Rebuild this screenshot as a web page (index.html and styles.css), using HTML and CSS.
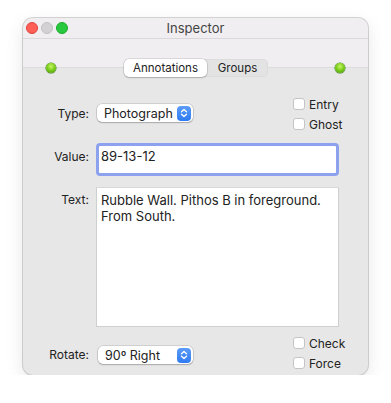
FILE: index.html
```html
<!DOCTYPE html>
<html lang="en">
<head>
    <meta charset="UTF-8">
    <title>Inspector</title>
    <link rel="stylesheet" href="styles.css">
</head>
<body>
    <div class="window">
        <div class="titlebar">
            <div class="lights">
                <span class="light red"></span>
                <span class="light off"></span>
                <span class="light green"></span>
            </div>
            <div class="title">Inspector</div>
        </div>

        <div class="toolbar"></div>

        <div class="tabrow">
            <span class="led"></span>
            <div class="tabs">
                <div class="segmented">
                    <span class="tab selected">Annotations</span>
                    <span class="tab">Groups</span>
                </div>
            </div>
            <span class="led"></span>
        </div>

        <div class="content">
            <div class="row row-type">
                <label class="label">Type:</label>
                <div class="control split">
                    <div class="popup">
                        <span>Photograph</span>
                        <span class="stepper">
                            <svg width="8" height="10" viewBox="0 0 8 10"><path d="M1.5 3.8 L4 1.5 L6.5 3.8 M1.5 6.2 L4 8.5 L6.5 6.2" fill="none" stroke="#fff" stroke-width="1.3" stroke-linecap="round" stroke-linejoin="round"/></svg>
                        </span>
                    </div>
                    <div class="checks">
                        <div class="check"><span class="box"></span>Entry</div>
                        <div class="check"><span class="box"></span>Ghost</div>
                    </div>
                </div>
            </div>

            <div class="row row-value">
                <label class="label">Value:</label>
                <div class="field focused">89-13-12</div>
            </div>

            <div class="row row-text">
                <label class="label">Text:</label>
                <div class="field area">Rubble Wall. Pithos B in foreground.<br>From South.</div>
            </div>

            <div class="row row-rotate">
                <label class="label">Rotate:</label>
                <div class="control split">
                    <div class="popup">
                        <span>90º Right</span>
                        <span class="stepper">
                            <svg width="8" height="10" viewBox="0 0 8 10"><path d="M1.5 3.8 L4 1.5 L6.5 3.8 M1.5 6.2 L4 8.5 L6.5 6.2" fill="none" stroke="#fff" stroke-width="1.3" stroke-linecap="round" stroke-linejoin="round"/></svg>
                        </span>
                    </div>
                    <div class="checks">
                        <div class="check"><span class="box"></span>Check</div>
                        <div class="check"><span class="box"></span>Force</div>
                    </div>
                </div>
            </div>
        </div>
    </div>
</body>
</html>
```

FILE: styles.css
```css
body {
    margin: 0;
    padding: 18px 0 0 23px;
    background: #ffffff;
    font-family: Inter, "Liberation Sans", sans-serif;
    color: #222;
}

.window {
    width: 345px;
    height: 357px;
    border-radius: 10px;
    overflow: hidden;
    background: #e7e7e7;
    box-shadow: 0 0 0 1px rgba(0,0,0,0.16), 0 6px 18px rgba(0,0,0,0.10);
    display: flex;
    flex-direction: column;
}

.titlebar {
    height: 20px;
    background: #f0eef0;
    border-bottom: 1px solid #dad8da;
    display: flex;
    align-items: center;
}

.lights {
    display: flex;
    gap: 3px;
    padding-left: 3px;
}

.light {
    width: 12px;
    height: 12px;
    border-radius: 50%;
    box-sizing: border-box;
}

.light.red { background: #fe5f57; border: 0.5px solid #e0443e; }
.light.off { background: #d3d1d3; border: 0.5px solid #c3c1c3; }
.light.green { background: #28c840; border: 0.5px solid #1aab29; }

.title {
    flex: 1;
    text-align: center;
    font-size: 13px;
    color: #454545;
    margin-right: 45px;
}

.toolbar {
    height: 20px;
    background: #f0eef0;
}

.tabrow {
    height: 18px;
    background: linear-gradient(to bottom, #f0eef0 0, #f0eef0 8px, #dcdcdc 8px, #dcdcdc 9px, #e7e7e7 9px);
    display: flex;
    align-items: center;
    padding: 0 23px;
}

.led {
    width: 10px;
    height: 10px;
    border-radius: 50%;
    background: radial-gradient(circle at 50% 35%, #c8f56a 0, #7ed01c 45%, #3f8f08 100%);
    box-shadow: 0 0 0 0.5px #3d7a0a;
}

.tabs {
    flex: 1;
    display: flex;
    justify-content: center;
}

.segmented {
    display: flex;
    background: #e3e3e3;
    border-radius: 5px;
    box-shadow: inset 0 0 0 0.5px rgba(0,0,0,0.06);
    margin-left: 1px;
}

.tab {
    font-size: 11.5px;
    height: 18px;
    line-height: 18px;
    text-align: center;
    color: #222;
}

.tab:last-child {
    width: 61px;
}

.tab.selected {
    width: 83px;
    background: #fff;
    border-radius: 5px;
    box-shadow: 0 0 0 0.5px rgba(0,0,0,0.18), 0 1px 1.5px rgba(0,0,0,0.18);
}

.content {
    flex: 1;
    padding: 17px 29px 0 0;
    display: flex;
    flex-direction: column;
}

.row {
    display: grid;
    grid-template-columns: 66px 1fr;
    column-gap: 7px;
}

.label {
    font-size: 12px;
    text-align: right;
    color: #222;
}

.split {
    display: flex;
    justify-content: space-between;
    align-items: center;
}

.row-type .label,
.row-rotate .label {
    align-self: center;
}

.row-type .label { margin-top: -2px; }
.row-rotate .label { margin-top: 2px; }

.popup {
    width: 96px;
    height: 18px;
    box-sizing: border-box;
    background: #fff;
    border-radius: 5px;
    box-shadow: 0 0 0 0.5px rgba(0,0,0,0.2), 0 1px 1.5px rgba(0,0,0,0.2);
    display: flex;
    align-items: center;
    justify-content: space-between;
    padding: 0 2px 0 7px;
    font-size: 12.5px;
    margin-left: 1px;
}

.row-type .popup { margin-top: -2px; }
.row-rotate .popup { margin-top: 4px; margin-left: 2px; width: 95px; }

.stepper {
    width: 14px;
    height: 15px;
    border-radius: 4px;
    background: linear-gradient(#5c9cf8, #2f7bf3);
    display: flex;
    align-items: center;
    justify-content: center;
}

.checks {
    display: flex;
    flex-direction: column;
    width: 46px;
}

.check {
    height: 20px;
    display: flex;
    align-items: center;
    gap: 4px;
    font-size: 12px;
    white-space: nowrap;
}

.box {
    flex-shrink: 0;
    width: 12px;
    height: 12px;
    box-sizing: border-box;
    border: 1px solid #c4c4c4;
    border-radius: 3px;
    background: #fff;
}

.row-value {
    margin-top: 9px;
}

.row-value .label {
    padding-top: 6px;
}

.field {
    background: #fff;
    font-size: 13px;
    box-sizing: border-box;
}

.field.focused {
    height: 33px;
    border: 3px solid #8da2ee;
    border-radius: 4px;
    padding: 2px;
    line-height: 16px;
}

.row-text {
    margin-top: 11px;
}

.row-text .label {
    padding-top: 5px;
}

.field.area {
    height: 140px;
    border: 1px solid #cfcfcf;
    border-top-color: #d8d8d8;
    padding: 4px;
    line-height: 16px;
}

.row-rotate {
    margin-top: 6px;
}
```
